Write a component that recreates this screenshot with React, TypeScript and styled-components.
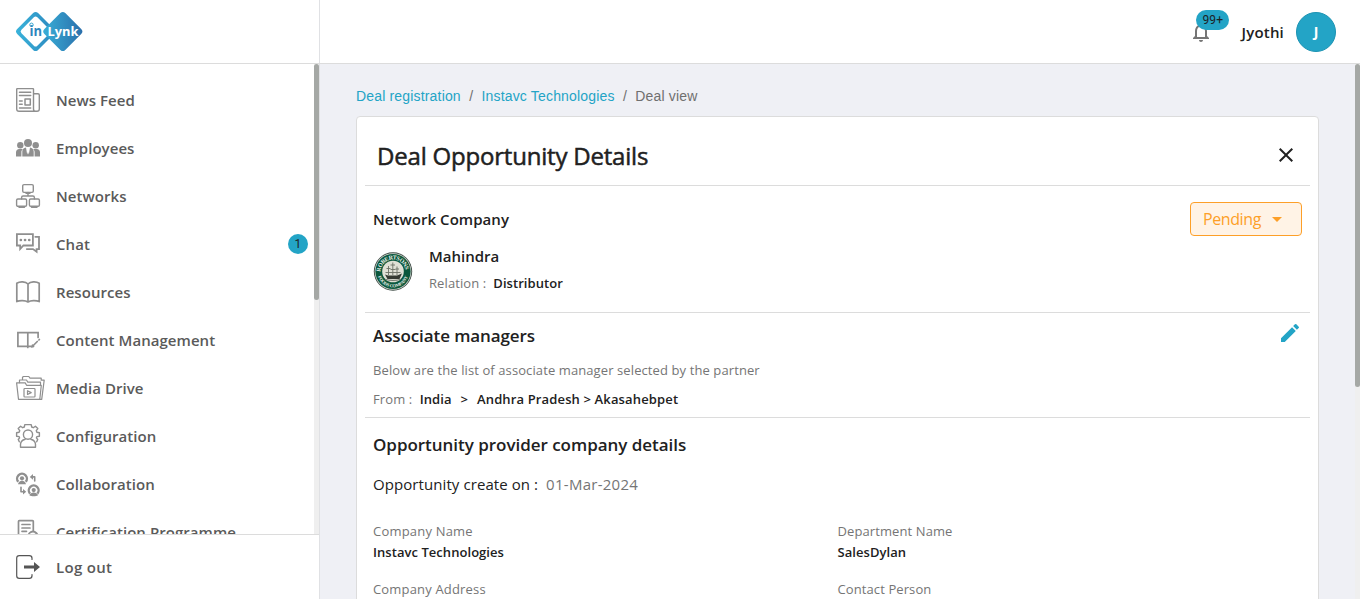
import React from "react";
import styled, { createGlobalStyle } from "styled-components";
import { MdNotificationsNone, MdClose, MdEdit, MdArrowDropDown } from "react-icons/md";

const Global = createGlobalStyle`
  * { box-sizing: border-box; }
  body { margin: 0; background: #eff0f5; font-family: "Open Sans", "Noto Sans", sans-serif; color: #212121; }
`;

const Page = styled.div`
  display: flex;
  flex-direction: column;
  height: 599px;
  overflow: hidden;
`;
const TopBar = styled.header`
  display: flex;
  height: 64px;
  flex: none;
  background: #fff;
  border-bottom: 1px solid #dcdcdc;
`;
const LogoArea = styled.div`
  width: 320px;
  padding: 11px 16px;
  border-right: 1px solid #e0e1e4;
`;
const UserArea = styled.div`
  flex: 1;
  display: flex;
  align-items: center;
  justify-content: flex-end;
  padding-right: 24px;
`;
const BellBox = styled.div`
  position: relative;
  display: flex;
  color: #757575;
  margin-right: 28px;
`;
const CountBadge = styled.span`
  display: flex;
  align-items: center;
  justify-content: center;
  min-width: 20px;
  height: 20px;
  padding: 0 6px;
  border-radius: 10px;
  background: #23a4c6;
  color: #1d2225;
  font: 12px Roboto, sans-serif;
  letter-spacing: 0.15px;
`;
const BellBadge = styled(CountBadge)`
  position: absolute;
  left: 7px;
  top: -10px;
`;
const UserName = styled.span`
  font-size: 15px;
  font-weight: 600;
  letter-spacing: 0.2px;
  margin-right: 12px;
`;
const Avatar = styled.div`
  width: 40px;
  height: 40px;
  border-radius: 50%;
  background: #23a4c6;
  border: 1px solid #1c93b3;
  color: #fff;
  font-size: 14px;
  font-weight: 700;
  display: flex;
  align-items: center;
  justify-content: center;
`;
const Body = styled.div`
  flex: 1;
  min-height: 0;
  display: flex;
`;
const Sidebar = styled.aside`
  width: 320px;
  flex: none;
  display: flex;
  flex-direction: column;
  background: #fff;
  border-right: 1px solid #e0e1e4;
`;
const MenuArea = styled.div`
  display: flex;
  height: 470px;
  overflow: hidden;
`;
const Menu = styled.nav`
  flex: 1;
  padding-top: 12px;
`;
const ScrollTrack = styled.div`
  width: 5px;
  flex: none;
  background: #efefef;
`;
const ScrollThumb = styled.div<{ $length: number }>`
  width: 5px;
  height: ${(p) => p.$length}px;
  border-radius: 3px;
  background: #a5a8a5;
`;
const MenuItem = styled.div`
  display: flex;
  align-items: center;
  height: 48px;
  padding: 0 6px 0 16px;
  font-size: 15px;
  font-weight: 600;
  color: #5a5a5a;
`;
const IconSlot = styled.span`
  width: 40px;
  height: 24px;
  flex: none;
  color: #8f8f8f;
  svg { display: block; overflow: visible; }
`;
const MenuLabel = styled.span`
  flex: 1;
  letter-spacing: 0.05px;
`;
const SidebarFooter = styled.div`
  flex: 1;
  border-top: 1px solid #dcdcdc;
  padding-top: 8px;
  ${IconSlot} { color: #555; }
  ${MenuLabel} { letter-spacing: 0.3px; }
`;
const Main = styled.main`
  flex: 1;
  min-width: 0;
  padding: 22px 36px 0 36px;
  overflow: hidden;
`;
const Crumbs = styled.div`
  display: flex;
  gap: 8.300px;
  height: 30px;
  line-height: 20px;
  font-family: "Liberation Sans", sans-serif;
  font-size: 14px;
  letter-spacing: 0.170px;
  color: #6f6f6f;
  a { color: #23a4c6; }
`;
const Card = styled.section`
  background: #fff;
  border: 1px solid #dcdcdc;
  border-radius: 4px;
  padding: 0 8px;
  height: 520px;
`;
const CardHeader = styled.div`
  display: flex;
  justify-content: space-between;
  align-items: center;
  height: 69px;
  padding: 10px 12px 0;
  border-bottom: 1px solid #dcdcdc;
`;
const Title = styled.h1`
  margin: 0;
  font-size: 24px;
  line-height: 32px;
  font-weight: 400;
  letter-spacing: -0.2px;
  -webkit-text-stroke: 0.5px #212121;
`;
const IconButton = styled.button`
  display: flex;
  padding: 0;
  border: 0;
  background: none;
  color: #23a4c6;
`;
const CloseButton = styled(IconButton)`
  color: #212121;
  margin-top: -3px;
`;
const Section = styled.div<{ $height?: number; $top: number }>`
  height: ${(p) => (p.$height ? `${p.$height}px` : "auto")};
  padding: ${(p) => p.$top}px 8px 0;
  border-bottom: ${(p) => (p.$height ? "1px solid #dcdcdc" : "0")};
`;
const SectionHead = styled.div`
  display: flex;
  justify-content: space-between;
`;
const Heading = styled.h2<{ $size: number; $line?: number; $spacing?: number }>`
  margin: 0;
  font-size: ${(p) => p.$size}px;
  line-height: ${(p) => p.$line ?? 27}px;
  font-weight: 600;
  letter-spacing: ${(p) => p.$spacing ?? 0}px;
`;
const StatusSelect = styled.button`
  display: flex;
  align-items: center;
  width: 112px;
  height: 34px;
  padding: 0 0 0 12px;
  gap: 4px;
  border: 1px solid #fd9f28;
  border-radius: 4px;
  background: #fff3e6;
  color: #fd9f28;
  font: 16px "Open Sans", sans-serif;
  letter-spacing: -0.4px;
`;
const Company = styled.div`
  display: flex;
  gap: 16px;
  margin-top: 8px;
  > svg { margin-top: 7px; }
`;
const CompanyText = styled.div`
  line-height: 24px;
`;
const CompanyName = styled.div`
  font-size: 15px;
  font-weight: 600;
`;
const Line = styled.div<{ $top?: number }>`
  display: flex;
  line-height: 21px;
  margin-top: ${(p) => p.$top ?? 0}px;
`;
const Text = styled.span<{ $strong?: boolean; $size?: number; $color?: string; $spacing?: number; $gap?: number }>`
  font-size: ${(p) => p.$size ?? 13}px;
  font-weight: ${(p) => (p.$strong ? 600 : 400)};
  color: ${(p) => p.$color ?? (p.$strong ? "#212121" : "#757575")};
  letter-spacing: ${(p) => p.$spacing ?? (p.$strong ? 0.05 : 0.1)}px;
  margin-right: ${(p) => p.$gap ?? 0}px;
`;
const Fields = styled.div`
  display: grid;
  grid-template-columns: 1fr 1fr;
  row-gap: 16px;
  margin-top: 26px;
`;
const Field = styled.div`
  display: flex;
  flex-direction: column;
  line-height: 21px;
`;

const Logo = () => (
  <svg width="68" height="40" viewBox="0 0 68 40">
    <defs>
      <linearGradient id="frameFill" x1="0" x2="1" y1="1" y2="0">
        <stop offset="0" stopColor="#3ab4db" />
        <stop offset="1" stopColor="#2b86bd" />
      </linearGradient>
      <linearGradient id="solidFill" x1="0" x2="1" y1="1" y2="0">
        <stop offset="0" stopColor="#39b0d8" />
        <stop offset="1" stopColor="#2a6daa" />
      </linearGradient>
    </defs>
    <rect x="4.850" y="5.750" width="29.500" height="29.500" rx="3.500" transform="rotate(45 19.600 20.500)" fill="url(#frameFill)" />
    <rect x="8.350" y="9.250" width="22.500" height="22.500" rx="2.500" transform="rotate(45 19.600 20.500)" fill="#fff" />
    <rect x="32.050" y="5.750" width="29.500" height="29.500" rx="3.500" transform="rotate(45 46.800 20.500)" fill="url(#solidFill)" />
    <circle cx="15.500" cy="13.800" r="1.700" fill="none" stroke="#37a6cf" strokeWidth="1" />
    <text x="13.500" y="24.800" fontFamily="Open Sans" fontWeight="700" fontSize="13.500" fill="#2e86bd" textLength="12.500" lengthAdjust="spacingAndGlyphs">in</text>
    <text x="31.500" y="24.800" fontFamily="Open Sans" fontWeight="700" fontSize="12.500" fill="#fff" textLength="31" lengthAdjust="spacingAndGlyphs">Lynk</text>
  </svg>
);

const stroke = { fill: "none", stroke: "currentColor", strokeWidth: 1.4, strokeLinejoin: "round", strokeLinecap: "round" } as const;
const Svg = ({ children, w = 24 }: { children: React.ReactNode; w?: number }) => (
  <svg width={w} height="24" viewBox={`0 0 ${w} 24`} {...stroke}>{children}</svg>
);

const NewsIcon = () => (
  <Svg>
    <path d="M17.500 21V1.200c0-.4-.2-.6-.6-.6H1.300c-.4 0-.6.2-.6.6V21c0 1.300 1 2.300 2.300 2.300h18c1.300 0 2.300-1 2.300-2.300V7c0-.9-.6-1.300-1.300-1.300h-4.200M17.500 21c0 1.300.9 2.300 2 2.300" />
    <path d="M3.500 4.300h11.200M3.500 7.500h11.200M3.500 13h2.700M3.500 16.200h2.700M3.500 20h11.200" strokeWidth="1.500" />
    <rect x="9" y="11" width="5.300" height="6" strokeWidth="1.500" />
  </Svg>
);
const PeopleIcon = () => (
  <Svg>
    <g fill="currentColor" stroke="none">
      <circle cx="12" cy="6.900" r="4" />
      <circle cx="4.300" cy="9.300" r="3.200" />
      <circle cx="19.700" cy="9.300" r="3.200" />
      <path d="M0 20.500v-4.200c0-2 1.300-3.400 3.300-3.400h2.400c.4 0 .8.100 1.100.2-.9.900-1.400 2-1.400 3.300v4.100zM24 20.500v-4.200c0-2-1.300-3.400-3.300-3.400h-2.400c-.4 0-.8.100-1.100.2.9.9 1.400 2 1.400 3.300v4.100zM6.300 20.500v-5c0-2.200 1.500-3.700 3.700-3.900l1.200 6.900.8-2.500.8 2.500 1.200-6.900c2.200.2 3.700 1.700 3.700 3.900v5z" />
    </g>
  </Svg>
);
const NetworkIcon = () => (
  <Svg>
    <rect x="6.700" y=".6" width="10.600" height="7.800" rx="1.300" />
    <rect x=".6" y="15" width="10" height="7.300" rx="1.300" />
    <rect x="13.400" y="15" width="10" height="7.300" rx="1.300" />
    <path d="M12 8.400v3.600M5.600 15v-1.500c0-1 .5-1.500 1.500-1.500h9.800c1 0 1.500.5 1.500 1.500V15M10 9.200h4M3 23.300h5.500M15.500 23.300H21" />
  </Svg>
);
const ChatIcon = () => (
  <Svg>
    <path d="M.9 2.100h16v11.400H7.400L4.200 17v-3.500H.9z" strokeWidth="1.800" strokeLinejoin="miter" />
    <path d="M19.300 4.800h3.700v12.300h-2.400v2.700l-3.600-2.700h-6.200" strokeWidth="1.800" strokeLinejoin="miter" />
    <path d="M4.800 8h.1M9 8h.1M13.200 8h.1" strokeWidth="2.600" />
  </Svg>
);
const BookIcon = () => (
  <Svg>
    <path d="M12 4C9.500 1.400 4 1.100.8 3.200v18.400c3-1.500 8.500-1.300 11.200.4 2.700-1.700 8.200-1.900 11.200-.4V3.200C20 1.100 14.500 1.400 12 4zM12 4v18" strokeWidth="1.700" />
  </Svg>
);
const ContentIcon = () => (
  <Svg>
    <path d="M11.800 5v14.500M11.800 4.600H1.900v13.800h9.900M11.800 4.600h10.300V9.500M11.800 18.400h3.400M17.300 17.500l4-4M22.900 12l.5-.5" strokeWidth="1.700" strokeLinejoin="miter" />
    <path d="M15.700 19l2-.5-1.300-1.500z" />
  </Svg>
);
const MediaIcon = () => (
  <Svg w={29}>
    <g strokeWidth="1.200">
      <path d="M.6 6.900h8.600l1.400 2.400h14.700l-1.500 14H2.500z" />
      <path d="M3.500 6.700V4h7l1.300 2.200h12.700V9M6.500 4V1.300l1-.8h5.300L14 2.200h11.200v2M25.200 4.200h3l-2.500 19.100h-2.500" />
      <rect x="8" y="12.500" width="11" height="8.500" rx=".8" />
      <path d="M11.500 14.700v3.800l3.700-1.900z" />
    </g>
  </Svg>
);
const ConfigIcon = () => (
  <Svg>
    <path d="M3.300 17.800l-1-2.300 1.300-1.600-.5-1.300-2.500-.4V8.700l2.500-.5.600-1.500L2.200 4.600l2.400-2.400 2.100 1.500 1.600-.7.500-2.400h6.400l.5 2.400 1.600.7 2.100-1.500 2.400 2.400-1.500 2.100.6 1.500 2.500.5v3.500l-2.500.4-.5 1.300 1.300 1.600-1 2.300" />
    <circle cx="12" cy="10.600" r="4.600" />
    <path d="M4.500 23.200v-2.600c0-2.700 1.900-4.700 4.700-5.400M19.500 23.200v-2.600c0-2.700-1.900-4.700-4.700-5.400M4.500 23.200h15" />
  </Svg>
);
const CollabIcon = () => (
  <Svg>
    <path d="M2.300 9.800a4.900 4.900 0 1 1 7.400 0M14 21.600a4.900 4.900 0 1 1 7.400 0" strokeWidth="2.400" strokeLinecap="butt" />
    <g fill="currentColor" stroke="none">
      <circle cx="6" cy="6.300" r="2.100" />
      <path d="M2 12.200c.4-2.200 2-3.400 4-3.400s3.600 1.200 4 3.400z" />
      <circle cx="17.700" cy="18.100" r="2.100" />
      <path d="M13.400 23.300c.6-1.700 2.200-2.700 4.300-2.700s3.700 1 4.300 2.700c-2 1.300-6.600 1.300-8.600 0z" />
      <path d="M13.800 4.900l3.200-2.800v5.600zM10.200 19.700L7 16.900v5.600z" />
    </g>
    <path d="M16.500 4.900h2.200v4M7.500 19.700H5v-4.500" strokeWidth="1.600" />
  </Svg>
);
const CertIcon = () => (
  <Svg>
    <path d="M17.300 11V1.500c0-.5-.3-.8-.8-.8H3.300c-.5 0-.8.3-.8.8v21" strokeWidth="1.700" />
    <path d="M6 4.500h8M6 8h8M6 11.300h4.500" strokeWidth="1.700" />
    <circle cx="17" cy="16" r="4.500" strokeWidth="1.800" />
    <path d="M15 16l1.500 1.500 3-3.500" />
  </Svg>
);
const LogoutIcon = () => (
  <Svg>
    <path d="M16 4.500V3.300C16 1.500 15 .6 13.300.6H3.300C1.600.6.7 1.500.7 3.300v17.400c0 1.800.9 2.700 2.600 2.700h10c1.700 0 2.700-.9 2.700-2.700v-1.200" strokeWidth="1.200" />
    <path d="M8 10.400h10V7l6 5-6 5v-3.400H8z" fill="currentColor" stroke="none" />
  </Svg>
);
const CompanySeal = () => (
  <svg width="40" height="40" viewBox="0 0 40 40">
    <circle cx="20" cy="20.500" r="19.200" fill="#3c4a44" />
    <circle cx="20" cy="20.500" r="18.300" fill="#d9dcd5" />
    <circle cx="20" cy="20.500" r="17.600" fill="#0b573c" />
    <path id="sealTop" d="M7.500 21a12.500 12.500 0 0 1 25 0" fill="none" />
    <path id="sealBottom" d="M4.200 20.500a15.800 15.800 0 0 0 31.600 0" fill="none" />
    <text fontFamily="Liberation Serif" fontWeight="700" fontSize="6" fill="#e9efe9">
      <textPath href="#sealTop" textLength="37">ROBERTSONS</textPath>
    </text>
    <text fontFamily="Liberation Serif" fontWeight="700" fontSize="4.600" fill="#e9efe9">
      <textPath href="#sealBottom" startOffset="5" textLength="39">FOODS COMPANY</textPath>
    </text>
    <circle cx="20" cy="20.500" r="10.800" fill="#dfe0d5" />
    <path d="M12 23.500l3 1h9l5-2-2.500 5.500H14.500z" fill="#353a32" />
    <path d="M15.500 24v-9M19.800 24V11.500M24 24v-8.500M13.500 17.500h4M17.500 14h4.500M17.500 18.500h5M22.500 18h3.500M12.500 21.500h15" stroke="#6c7065" strokeWidth=".9" fill="none" />
    <path d="M12 28.300c5 1.500 11 1.500 16 0" stroke="#71776d" fill="none" />
  </svg>
);

const items: { label: string; icon: React.ReactNode; count?: number }[] = [
  { label: "News Feed", icon: <NewsIcon /> },
  { label: "Employees", icon: <PeopleIcon /> },
  { label: "Networks", icon: <NetworkIcon /> },
  { label: "Chat", icon: <ChatIcon />, count: 1 },
  { label: "Resources", icon: <BookIcon /> },
  { label: "Content Management", icon: <ContentIcon /> },
  { label: "Media Drive", icon: <MediaIcon /> },
  { label: "Configuration", icon: <ConfigIcon /> },
  { label: "Collaboration", icon: <CollabIcon /> },
  { label: "Certification Programme", icon: <CertIcon /> },
];

export default function App() {
  return (
    <Page>
      <Global />
      <TopBar>
        <LogoArea><Logo /></LogoArea>
        <UserArea>
          <BellBox>
            <MdNotificationsNone size={24} />
            <BellBadge>99+</BellBadge>
          </BellBox>
          <UserName>Jyothi</UserName>
          <Avatar>J</Avatar>
        </UserArea>
      </TopBar>
      <Body>
        <Sidebar>
          <MenuArea>
            <Menu>
              {items.map((it) => (
                <MenuItem key={it.label}>
                  <IconSlot>{it.icon}</IconSlot>
                  <MenuLabel>{it.label}</MenuLabel>
                  {it.count && <CountBadge>{it.count}</CountBadge>}
                </MenuItem>
              ))}
            </Menu>
            <ScrollTrack><ScrollThumb $length={236} /></ScrollTrack>
          </MenuArea>
          <SidebarFooter>
            <MenuItem>
              <IconSlot><LogoutIcon /></IconSlot>
              <MenuLabel>Log out</MenuLabel>
            </MenuItem>
          </SidebarFooter>
        </Sidebar>
        <Main>
          <Crumbs>
            <a>Deal registration</a><span>/</span><a>Instavc Technologies</a><span>/</span><span>Deal view</span>
          </Crumbs>
          <Card>
            <CardHeader>
              <Title>Deal Opportunity Details</Title>
              <CloseButton><MdClose size={24} /></CloseButton>
            </CardHeader>
            <Section $height={127} $top={16}>
              <SectionHead>
                <Heading $size={15} $line={34} $spacing={0.05}>Network Company</Heading>
                <StatusSelect>Pending<MdArrowDropDown size={24} /></StatusSelect>
              </SectionHead>
              <Company>
                <CompanySeal />
                <CompanyText>
                  <CompanyName>Mahindra</CompanyName>
                  <Line $top={5}><Text $gap={7}>Relation :</Text><Text $strong>Distributor</Text></Line>
                </CompanyText>
              </Company>
            </Section>
            <Section $height={105} $top={8}>
              <SectionHead>
                <Heading $size={17} $line={29} $spacing={-0.1}>Associate managers</Heading>
                <IconButton><MdEdit size={24} /></IconButton>
              </SectionHead>
              <Line $top={10}><Text>Below are the list of associate manager selected by the partner</Text></Line>
              <Line $top={8}>
                <Text $gap={7.5}>From :</Text>
                <Text $strong $gap={9}>India</Text>
                <Text $strong $gap={9}>&gt;</Text>
                <Text $strong $spacing={0.14}>Andhra Pradesh &gt; Akasahebpet</Text>
              </Line>
            </Section>
            <Section $top={13}>
              <Heading $size={17} $spacing={-0.03}>Opportunity provider company details</Heading>
              <Line $top={16}>
                <Text $size={15} $color="#212121" $spacing={0.08} $gap={8}>Opportunity create on :</Text>
                <Text $size={15} $spacing={0.27}>01-Mar-2024</Text>
              </Line>
              <Fields>
                <Field><Text $spacing={0.2}>Company Name</Text><Text $strong>Instavc Technologies</Text></Field>
                <Field><Text>Department Name</Text><Text $strong>SalesDylan</Text></Field>
                <Field><Text $spacing={0.17}>Company Address</Text></Field>
                <Field><Text>Contact Person</Text></Field>
              </Fields>
            </Section>
          </Card>
        </Main>
        <ScrollTrack><ScrollThumb $length={323} /></ScrollTrack>
      </Body>
    </Page>
  );
}
